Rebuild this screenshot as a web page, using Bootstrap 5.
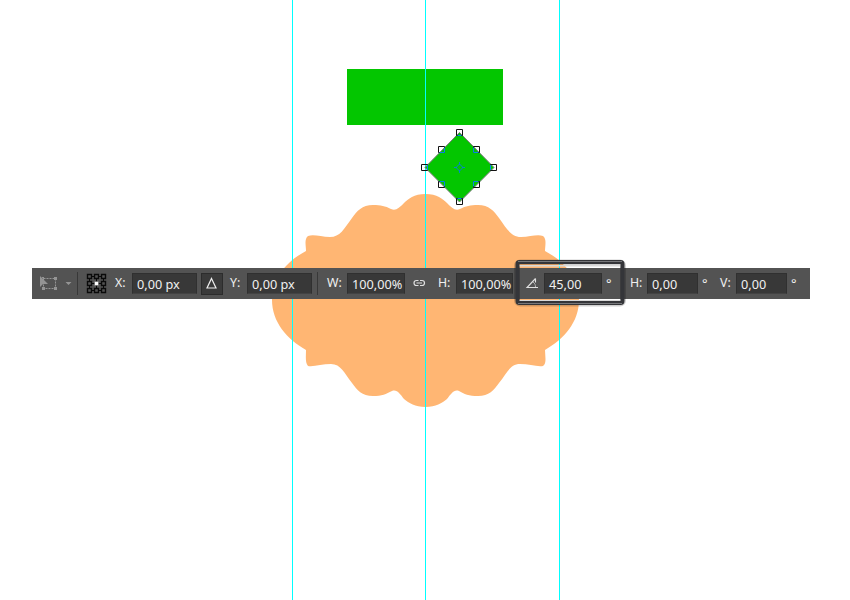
<!DOCTYPE html>
<html lang="en">
<head>
<meta charset="utf-8">
<meta name="viewport" content="width=device-width, initial-scale=1">
<title>Transform options</title>
<link rel="stylesheet" href="https://cdn.jsdelivr.net/npm/bootstrap@5.3.0/dist/css/bootstrap.min.css">
<style>
body{width:850px;height:600px;background:#fff;font-family:"Noto Sans","Open Sans",sans-serif}
.artboard{width:850px;height:600px}
.options-bar{left:32px;top:268px;width:778px;height:31px;background:#535353;color:#f0f0f0;font-size:12.3px;line-height:20px}
.options-bar>*{flex:none}
.options-bar>span{margin-top:-2px}
.field{height:21px;background:#383838;border:1px solid #303030;border-bottom-color:#434343;padding-left:4px;font-size:12.7px;line-height:20px;white-space:nowrap;overflow:hidden}
.w-pos{width:65px}.w-pct{width:58px}.w-height{width:57px}.w-deg{width:51px}
.delta{width:22px;height:22px;background:#3a3a3a;border:1px solid #2c2c2c}
.divider{width:1px;height:23px;background:#383838}
.s15{width:15px}.s16{width:16px}.s17{width:17px}.s18{width:18px}.s20{width:20px}.s22{width:22px}.s28{width:28px}.s31{width:31px}.s33{width:33px}.s37{width:37px}.s45{width:45px}
.deg{padding-left:4px;font-size:13px}
.callout-frame{left:512px;top:256px}
</style>
</head>
<body class="overflow-hidden">
<main class="artboard position-relative overflow-hidden">
<svg class="d-block" width="850" height="600" viewBox="0 0 850 600">
  <path fill="#ffb673" d="M425.500 194C437 194 443 199 447 203C452 208 455 211 460 209C466 206 470 205 478 205C489 205 494 211 499 218C507 229 511 237 521 237C530 237 537 234 543 236C547 239 545 246 545 251C564 261 579 278 579 300C579 322 564 339 545 350C545 356 547 363 543 366C537 367 529 364 520 364C510 364 507 373 499 383C494 390 489 396 478 396C469 396 464 394 459 391C454 389 451 394 447 399C442 403 436 407 425.500 407C415 407 409 403 404 399C400 394 397 389 392 391C386 394 382 396 373 396C362 396 357 390 352 383C344 373 341 364 331 364C322 364 314 367 308 366C305 363 306 356 306 350C287 339 272 322 272 300C272 278 287 261 306 251C306 246 304 239 308 236C314 234 321 237 330 237C340 237 344 229 352 218C357 211 362 205 373 205C381 205 385 206 391 209C396 211 399 208 404 203C408 199 414 194 425.500 194Z"/>
  <path fill="#03c600" d="M347 69h156v56H347z"/>
  <path fill="#00ffff" d="M292 0h1v600h-1zM425 0h1v600h-1zM559 0h1v600h-1z"/>
  <path fill="#03c600" stroke="#777" stroke-width="1" d="M459.500 132.500L494 167.500L459.500 202L425 167.500Z"/>
  <g fill="none" stroke="#111">
    <path d="M456.500 129.500h6v6h-6zM456.500 198.500h6v6h-6zM421.500 164.500h6v6h-6zM490.500 164.500h6v6h-6zM438.500 146.500h6v6h-6zM473.500 146.500h6v6h-6zM438.500 181.500h6v6h-6zM473.500 181.500h6v6h-6z"/>
    <path stroke="#0784e8" d="M444.500 147.500v5h-5M473.500 147.500v5h5M444.500 186.500v-5h-5M473.500 186.500v-5h5M427.500 165v5M490.500 165v5M457.500 135.500h4M457.500 198.500h4"/>
    <path stroke="#0784c8" d="M459.500 162v3M459.500 170v3M454 167.500h3M462 167.500h3M456 167.500l3.500-3.500 3.500 3.500-3.500 3.500z"/>
  </g>
</svg>
<div class="options-bar position-absolute d-flex align-items-center">
  <div class="s45">
    <svg class="d-block" width="45" height="31"><path fill="none" stroke="#949494" stroke-dasharray="2 1" d="M11.500 10.500h12v10h-12z"/><path fill="#949494" d="M8 8v11l3-3h5zM10 9h2v2h-2zM22 9h3v3h-3zM22 19h3v3h-3zM10 19h3v3h-3zM33.500 14h6l-3 3z"/></svg>
  </div>
  <div class="divider"></div>
  <div class="s37">
    <svg class="d-block" width="37" height="31"><path stroke="#0a0a0a" fill="none" d="M12 8.500h14M12 15.500h14M12 22.500h14M11.500 9v14M18.500 9v14M25.500 9v14"/><g fill="#535353" stroke="#0a0a0a" stroke-width="1.400"><path d="M9.500 6.500h4v4h-4zM16.500 6.500h4v4h-4zM23.500 6.500h4v4h-4zM9.500 13.500h4v4h-4zM23.500 13.500h4v4h-4zM9.500 20.500h4v4h-4zM16.500 20.500h4v4h-4zM23.500 20.500h4v4h-4z"/><path fill="#fff" stroke="#555" stroke-width=".5" d="M16.500 13.500h4v4h-4z"/></g></svg>
  </div>
  <span class="s17">X:</span><div class="field w-pos">0,00 px</div>
  <div class="s33 ps-1"><div class="delta"><svg class="d-block" width="20" height="20"><path fill="none" stroke="#eee" stroke-width="1.200" d="M9.500 4.500l4.500 9.500H5z"/></svg></div></div>
  <span class="s17">Y:</span><div class="field w-pos">0,00 px</div>
  <div class="s15 d-flex justify-content-center"><div class="divider me-1"></div></div>
  <span class="s20">W:</span><div class="field w-pct">100,00%</div>
  <div class="s33"><svg class="d-block" width="33" height="31"><g fill="none" stroke="#e0e0e0" stroke-width="1.200"><path d="M13.500 12.500h-2a2.500 2.500 0 0 0 0 5h2M15 12.500h2a2.500 2.500 0 0 1 0 5h-2M11.500 15h5.500"/></g></svg></div>
  <span class="s18">H:</span><div class="field w-height">100,00%</div>
  <div class="s31"><svg class="d-block" width="31" height="31"><path fill="none" stroke="#e0e0e0" stroke-width="1.100" d="M22.500 10.500L14 19.500h11M22.500 10.500v4"/><path fill="none" stroke="#b5b5b5" d="M20 14c2 1.500 2.500 3 2.500 5"/></svg></div>
  <div class="field w-pct">45,00</div><span class="s28 deg">°</span>
  <span class="s17">H:</span><div class="field w-deg">0,00</div><span class="s22 deg">°</span>
  <span class="s16">V:</span><div class="field w-deg">0,00</div><span class="deg">°</span>
</div>
<svg class="callout-frame position-absolute" width="118" height="54">
  <g fill="none"><rect x="5" y="6.500" width="106" height="41" rx="3" stroke="#000" stroke-opacity=".18" stroke-width="6"/><path stroke="#d9d9d9" stroke-width="1.500" d="M7 9.800h102M7 44.800h102"/><rect x="5.500" y="6" width="105" height="41" rx="2" stroke="#343539" stroke-width="4"/><path stroke="#77787b" stroke-width="1" d="M6 5.500h104M6 47.500h104"/></g>
</svg>
</main>
<script src="https://cdn.jsdelivr.net/npm/bootstrap@5.3.0/dist/js/bootstrap.bundle.min.js"></script>
</body>
</html>
